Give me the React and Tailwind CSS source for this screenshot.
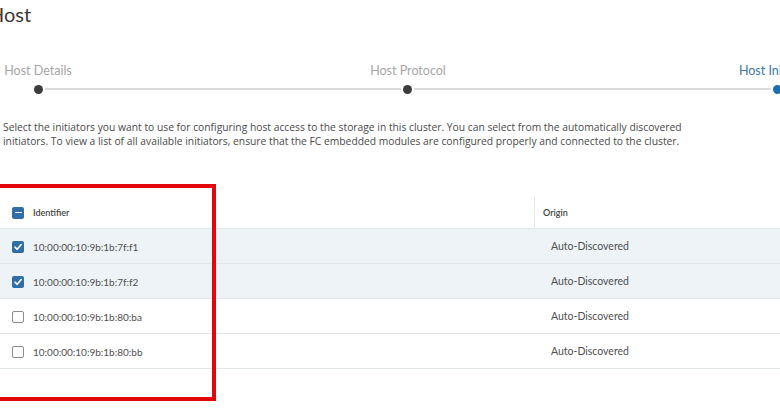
import React from "react";

const rows = [
  { id: "10:00:00:10:9b:1b:7f:f1", checked: true },
  { id: "10:00:00:10:9b:1b:7f:f2", checked: true },
  { id: "10:00:00:10:9b:1b:80:ba", checked: false },
  { id: "10:00:00:10:9b:1b:80:bb", checked: false },
];

function Box({ state }) {
  if (state === "none") {
    return <span className="block w-[12px] h-[12px] rounded-[2px] border border-[#8c8c8c] bg-white" />;
  }
  return (
    <span className="flex items-center justify-center w-[12px] h-[12px] rounded-[2px] bg-[#2f6ea6]">
      {state === "checked" ? (
        <svg width="10" height="10" viewBox="0 0 10 10">
          <path d="M2 5.2 L4.2 7.3 L8.2 2.6" fill="none" stroke="white" strokeWidth="1.6" strokeLinecap="round" strokeLinejoin="round" />
        </svg>
      ) : (
        <span className="block w-[7px] h-[1.6px] bg-white" />
      )}
    </span>
  );
}

export default function App() {
  return (
    <div className="relative w-[780px] h-[417px] overflow-hidden bg-white text-[#555]" style={{ fontFamily: "Lato, 'Open Sans', sans-serif" }}>
      <div className="pt-[2px] ml-[-11px] text-[20px] leading-[24px] text-[#3a3a3a]">Host</div>

      <div className="mt-[37px] flex ml-[-12px] gap-[270px] text-[12.5px] leading-[16px]">
        <div className="w-[100px] shrink-0 text-center text-[#a6a6a6]">Host Details</div>
        <div className="w-[100px] shrink-0 text-center text-[#a6a6a6]">Host Protocol</div>
        <div className="w-[100px] shrink-0 text-center text-[#3d78a6] whitespace-nowrap">Host Initiators</div>
      </div>

      <div className="mt-[5px] flex items-center h-[10px]">
        <span className="ml-[34px] shrink-0 w-[9px] h-[9px] rounded-full bg-[#3c3c3c]" />
        <span className="mx-[2px] shrink-0 w-[356px] h-[2px] bg-[#dcdcdc]" />
        <span className="shrink-0 w-[9px] h-[9px] rounded-full bg-[#3c3c3c]" />
        <span className="mx-[2px] shrink-0 w-[357px] h-[2px] bg-[#dcdcdc]" />
        <span className="shrink-0 w-[9px] h-[9px] rounded-full bg-[#1a6fb0]" />
      </div>

      <p
        className="mt-[26px] pl-[3px] w-[705px] text-[10.3px] leading-[14px] text-[#4a4a4a]"
        style={{ fontFamily: "'Open Sans', sans-serif" }}
      >
        Select the initiators you want to use for configuring host access to the storage in this cluster. You can select from the automatically discovered initiators. To view a list of all available initiators, ensure that the FC embedded modules are configured properly and connected to the cluster.
      </p>

      <div className="mt-[49px] w-[800px] text-[10px]">
        <div className="flex h-[32px] items-center border-b border-[#e3e8eb]">
          <div className="w-[534px] flex items-center pl-[12px] gap-[9px]">
            <Box state="mixed" />
            <span className="text-[9px] font-semibold text-[#444]">Identifier</span>
          </div>
          <div className="h-full flex items-center border-l border-[#e6e6e6] pl-[8px] text-[9px] font-semibold text-[#444]">Origin</div>
        </div>
        {rows.map((r) => (
          <div
            key={r.id}
            className={`flex h-[35px] items-center pt-[2px] border-b border-[#e1e6e9] ${r.checked ? "bg-[#edf3f7]" : "bg-white"}`}
          >
            <div className="w-[534px] flex items-center pl-[12px] gap-[9px]">
              <Box state={r.checked ? "checked" : "none"} />
              <span className="text-[#505050]">{r.id}</span>
            </div>
            <div className="pl-[17px] text-[10.5px] text-[#505050]">Auto-Discovered</div>
          </div>
        ))}
      </div>

      <div className="absolute left-[-10px] top-[184px] w-[226px] h-[217px] border-[4px] border-[#e3060b] pointer-events-none" />
    </div>
  );
}
